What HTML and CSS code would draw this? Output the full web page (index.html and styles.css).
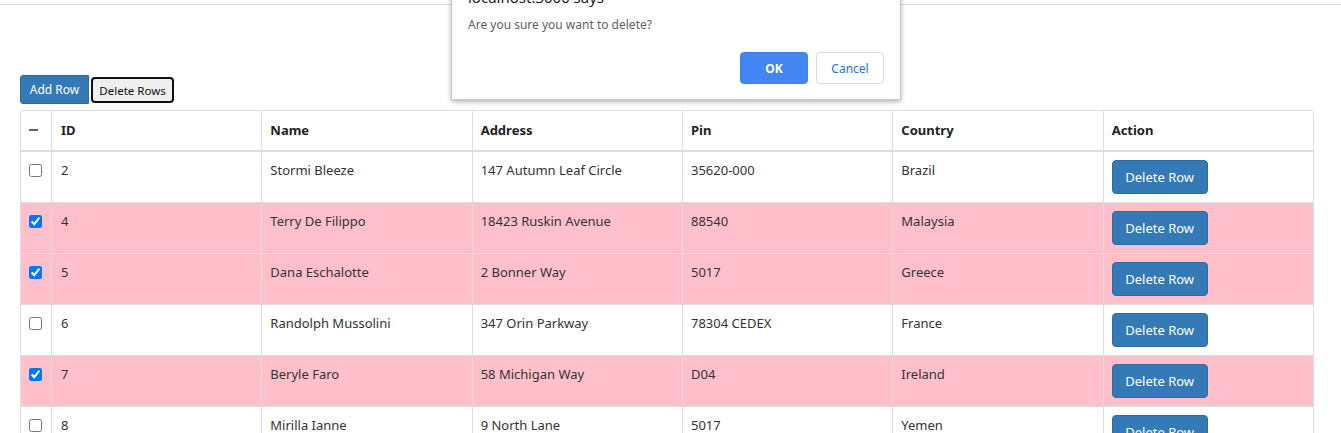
FILE: index.html
```html
<!DOCTYPE html>
<html>
<head>
<meta charset="utf-8">
<link rel="stylesheet" href="styles.css">
</head>
<body>
<div class="topbar"></div>
<main class="page">
  <div class="toolbar">
    <button class="btn btn-add">Add Row</button>
    <button class="btn btn-delrows">Delete Rows</button>
  </div>
  <table class="grid">
    <colgroup>
      <col class="c-check"><col><col><col><col><col><col>
    </colgroup>
    <thead>
      <tr>
        <th><span class="minus"></span></th>
        <th>ID</th><th>Name</th><th>Address</th><th>Pin</th><th>Country</th><th>Action</th>
      </tr>
    </thead>
    <tbody>
      <tr>
        <td><input type="checkbox"></td><td>2</td><td>Stormi Bleeze</td><td>147 Autumn Leaf Circle</td><td>35620-000</td><td>Brazil</td>
        <td><button class="btn btn-row">Delete Row</button></td>
      </tr>
      <tr class="sel">
        <td><input type="checkbox" checked></td><td>4</td><td>Terry De Filippo</td><td>18423 Ruskin Avenue</td><td>88540</td><td>Malaysia</td>
        <td><button class="btn btn-row">Delete Row</button></td>
      </tr>
      <tr class="sel">
        <td><input type="checkbox" checked></td><td>5</td><td>Dana Eschalotte</td><td>2 Bonner Way</td><td>5017</td><td>Greece</td>
        <td><button class="btn btn-row">Delete Row</button></td>
      </tr>
      <tr>
        <td><input type="checkbox"></td><td>6</td><td>Randolph Mussolini</td><td>347 Orin Parkway</td><td>78304 CEDEX</td><td>France</td>
        <td><button class="btn btn-row">Delete Row</button></td>
      </tr>
      <tr class="sel">
        <td><input type="checkbox" checked></td><td>7</td><td>Beryle Faro</td><td>58 Michigan Way</td><td>D04</td><td>Ireland</td>
        <td><button class="btn btn-row">Delete Row</button></td>
      </tr>
      <tr>
        <td><input type="checkbox"></td><td>8</td><td>Mirilla Ianne</td><td>9 North Lane</td><td>5017</td><td>Yemen</td>
        <td><button class="btn btn-row">Delete Row</button></td>
      </tr>
    </tbody>
  </table>
</main>
<div class="dialog">
  <div class="dlg-title">localhost:3000 says</div>
  <div class="dlg-msg">Are you sure you want to delete?</div>
  <div class="dlg-actions">
    <button class="dbtn dbtn-ok">OK</button>
    <button class="dbtn dbtn-cancel">Cancel</button>
  </div>
</div>
</body>
</html>
```

FILE: styles.css
```css
html, body {
  margin: 0;
  padding: 0;
  background: #fff;
  overflow: hidden;
}
body {
  font-family: "Noto Sans", "Open Sans", sans-serif;
  font-size: 13px;
  line-height: 20px;
  color: #333;
  height: 433px;
  position: relative;
}
.topbar {
  height: 4px;
  border-bottom: 1px solid #dcdcdc;
}
.page {
  padding: 70px 0 0 20px;
}
.toolbar {
  display: flex;
  gap: 2px;
  margin-bottom: 6px;
}
.btn {
  font-family: inherit;
  cursor: pointer;
  white-space: nowrap;
}
.btn-add {
  background: #337ab7;
  color: #fff;
  border: 1px solid #2e6da4;
  border-radius: 3px 0 0 3px;
  font-size: 12px;
  height: 29px;
  width: 69px;
  padding: 0;
}
.btn-delrows {
  background: #efefef;
  color: #111;
  border: 2px solid #101010;
  border-radius: 4px;
  font-size: 11.5px;
  height: 26px;
  width: 83px;
  padding: 0;
  margin-top: 2px;
}
.grid {
  width: 1294px;
  table-layout: fixed;
  border-collapse: separate;
  border-spacing: 0;
  border: 1px solid #ddd;
  border-radius: 4px;
}
.c-check { width: 30px; }
.grid th, .grid td {
  text-align: left;
  vertical-align: top;
  padding: 8px 8px 8px 9px;
  border-left: 1px solid #ddd;
  border-top: 1px solid #ddd;
  white-space: nowrap;
}
.grid th:first-child, .grid td:first-child { border-left: 0; }
.grid thead th {
  border-top: 0;
  border-bottom: 2px solid #ddd;
  font-weight: 700;
  color: #222;
  padding: 9px 8px 10px 9px;
}
.grid thead th:first-child { padding-left: 8px; }
.grid tbody tr:first-child td { border-top: 0; }
.grid td:first-child { padding: 12px 8px 0; }
.grid td:nth-child(n+3) { padding-left: 8px; }
.grid th:nth-child(n+3) { padding-left: 8px; }
.grid input[type=checkbox] {
  margin: 0;
  width: 13px;
  height: 13px;
  display: block;
  accent-color: #0075ff;
}
.minus {
  display: block;
  width: 9px;
  height: 2px;
  background: #666;
  margin-top: 9px;
}
.sel td { background: #ffc0cb; }
.btn-row {
  background: #337ab7;
  color: #fff;
  border: 1px solid #2e6da4;
  border-radius: 4px;
  font-size: 13px;
  line-height: 20px;
  padding: 6px 0;
  width: 96px;
  height: 34px;
}
.dialog {
  position: absolute;
  left: 451px;
  top: -23px;
  width: 450px;
  height: 123px;
  box-sizing: border-box;
  background: #fff;
  border: 1px solid #c8c8c8;
  border-top: 0;
  border-radius: 0 0 2px 2px;
  box-shadow: 0 2px 5px rgba(0,0,0,0.3);
  padding: 10px 16px 15px 16px;
  display: flex;
  flex-direction: column;
}
.dlg-title {
  font-size: 15px;
  line-height: 20px;
  color: #202124;
}
.dlg-msg {
  font-size: 12px;
  line-height: 16px;
  color: #5f5f5f;
  margin-top: 10px;
}
.dlg-actions {
  display: flex;
  justify-content: flex-end;
  gap: 8px;
  margin-top: auto;
}
.dbtn {
  font-family: inherit;
  font-size: 12px;
  width: 68px;
  height: 32px;
  border-radius: 4px;
  padding: 0;
}
.dbtn-ok {
  background: #4285f4;
  border: 1px solid #3f80ea;
  color: #fff;
  font-weight: 700;
}
.dbtn-cancel {
  background: #fff;
  border: 1px solid #dadce0;
  color: #1a73e8;
}
```
